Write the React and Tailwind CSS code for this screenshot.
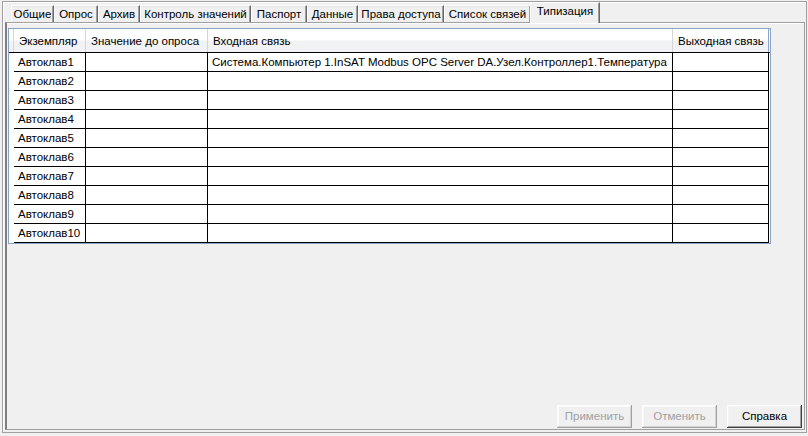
import React from "react";

const tabs = [
  { label: "Общие", w: "w-[43px]" },
  { label: "Опрос", w: "w-[44px]" },
  { label: "Архив", w: "w-[42px]" },
  { label: "Контроль значений", w: "w-[111px]" },
  { label: "Паспорт", w: "w-[56px]" },
  { label: "Данные", w: "w-[51px]" },
  { label: "Права доступа", w: "w-[86px]" },
  { label: "Список связей", w: "w-[87px]" },
];

const rows = [
  ["Автоклав1", "", "Система.Компьютер 1.InSAT Modbus OPC Server DA.Узел.Контроллер1.Температура", ""],
  ["Автоклав2", "", "", ""],
  ["Автоклав3", "", "", ""],
  ["Автоклав4", "", "", ""],
  ["Автоклав5", "", "", ""],
  ["Автоклав6", "", "", ""],
  ["Автоклав7", "", "", ""],
  ["Автоклав8", "", "", ""],
  ["Автоклав9", "", "", ""],
  ["Автоклав10", "", "", ""],
];

const colW = ["w-[72px]", "w-[122px]", "w-[465px]", "w-[96px]"];
const headers = ["Экземпляр", "Значение до опроса", "Входная связь", "Выходная связь"];

function Button({ children, disabled }) {
  return (
    <div
      className={
        "w-[75px] h-[23px] flex items-center justify-center bg-[#f0f0f0] " +
        (disabled
          ? "text-[#a0a0a0] shadow-[inset_-1px_-1px_0_#a0a0a0,inset_1px_1px_0_#ffffff,inset_-2px_-2px_0_#d4d4d4,inset_2px_2px_0_#f8f8f8]"
          : "text-black shadow-[inset_-1px_-1px_0_#404040,inset_1px_1px_0_#ffffff,inset_-2px_-2px_0_#a0a0a0,inset_2px_2px_0_#f4f4f4]")
      }
    >
      {children}
    </div>
  );
}

export default function App() {
  return (
    <div className="w-[808px] h-[436px] bg-[#f0f0f0] overflow-hidden font-['Liberation_Sans',Arial,sans-serif] text-[11.5px] text-black leading-none">
      <div className="mt-[1px] ml-[2px] w-[805px] h-[432px] border border-[#a0a0a0] shadow-[inset_1px_1px_0_#ffffff] flex flex-col">
        {/* tab strip */}
        <div className="h-[20px] pl-[8px] flex items-end relative z-10">
          {tabs.map((t) => (
            <div
              key={t.label}
              className={
                t.w +
                " h-[17px] flex items-center justify-center bg-[#f0f0f0] border-t border-l border-white border-r border-r-[#696969] shadow-[inset_-1px_0_0_#a0a0a0,inset_0_1px_0_#e3e3e3] pt-[1px] whitespace-nowrap"
              }
            >
              {t.label}
            </div>
          ))}
          <div className="w-[70px] h-[21px] -mb-[1px] -ml-[1px] flex items-center justify-center bg-[#f0f0f0] border-t border-l border-white border-r border-r-[#696969] shadow-[inset_-1px_0_0_#a0a0a0] pb-[2px]">
            Типизация
          </div>
        </div>
        {/* panel */}
        <div className="ml-[2px] w-[800px] h-[408px] border-t border-t-[#a0a0a0] border-l-2 border-l-[#808080] border-r border-r-[#a0a0a0] border-b border-b-[#a0a0a0] shadow-[inset_0_1px_0_#ffffff] flex flex-col">
          <div className="mt-[5px] ml-[1px] w-[763px] border border-[#8ba3c7] bg-white flex flex-col">
            {/* header */}
            <div className="flex h-[24px] border-b border-black bg-[linear-gradient(#ffffff_0%,#ffffff_45%,#f1f2f4_55%,#f1f2f4_100%)]">
              <div className="w-[5px] border-r border-[#d5d5d5]" />
              {headers.map((h, i) => (
                <div
                  key={h}
                  className={colW[i] + " flex items-center pl-[5px] pt-[3px] whitespace-nowrap border-r " + (i === 3 ? "border-[#8ba3c7]" : "border-[#d5d5d5]")}
                >
                  {h}
                </div>
              ))}
            </div>
            {rows.map((r, ri) => (
              <div key={ri} className="flex h-[19px]">
                <div className="w-[5px]" />
                <div className="flex border-b border-black">
                  {r.map((c, ci) => (
                    <div
                      key={ci}
                      className={colW[ci] + " flex items-center pl-[4px] pt-[1px] border-r border-black whitespace-nowrap overflow-hidden"}
                    >
                      {c}
                    </div>
                  ))}
                </div>
              </div>
            ))}
          </div>
          <div className="mt-auto flex justify-end gap-[10px] pr-[2px] pb-[1px]">
            <Button disabled>Применить</Button>
            <Button disabled>Отменить</Button>
            <Button>Справка</Button>
          </div>
        </div>
      </div>
    </div>
  );
}
